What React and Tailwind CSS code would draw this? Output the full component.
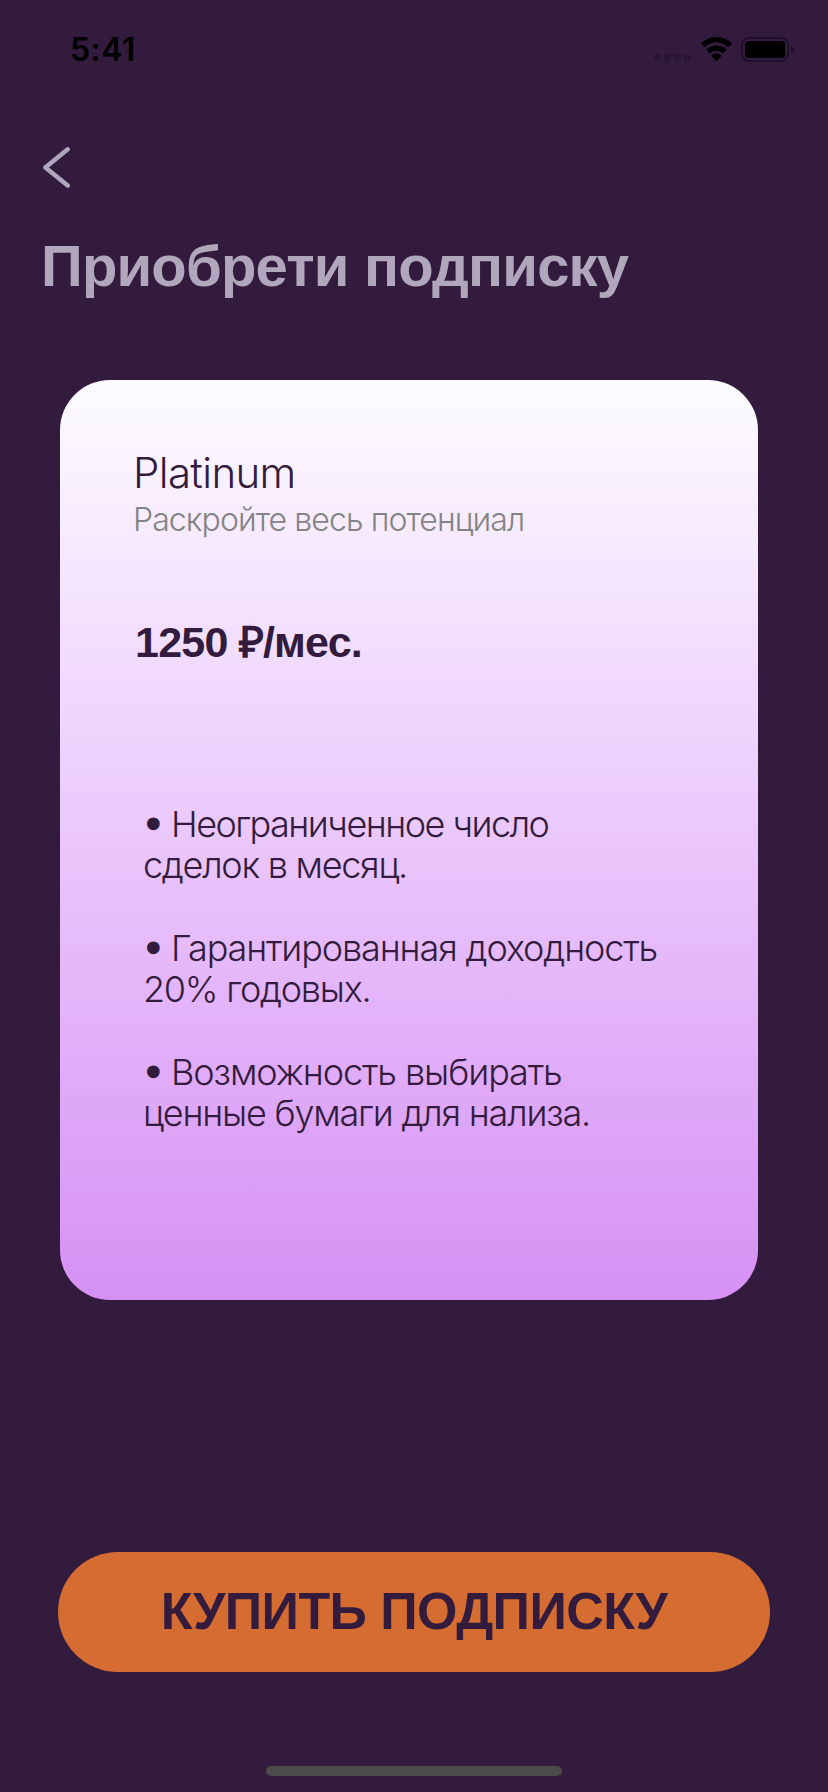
function SignalDots() {
  return (
    <div className="flex gap-[3px] pt-[17px]">
      <span className="size-[7px] rounded-[2px] bg-[#2a1633]" />
      <span className="size-[7px] rounded-[2px] bg-[#2a1633]" />
      <span className="size-[7px] rounded-[2px] bg-[#2a1633]" />
      <span className="size-[7px] rounded-[2px] bg-[#2a1633]" />
    </div>
  );
}

function WifiIcon() {
  return (
    <svg className="ml-[9px] block" width="33" height="25" viewBox="0 0 33 25" fill="#000">
      <path d="M16.5 5.2c4.3 0 8.3 1.7 11.4 4.6.3.3.7.3.9 0l2.8-2.7c.3-.3.3-.7 0-1C27.500 2.100 22.200 0 16.500 0S5.500 2.100 1.400 6.100c-.3.3-.3.7 0 1l2.800 2.700c.2.300.6.300.9 0C8.200 6.900 12.200 5.200 16.500 5.200z" />
      <path d="M16.500 13.700c2.300 0 4.500.9 6.200 2.300.3.300.7.300.9 0l2.700-2.700c.3-.3.300-.700 0-1C23.700 9.900 20.200 8.600 16.500 8.600s-7.200 1.300-9.800 3.700c-.3.300-.3.700 0 1l2.700 2.700c.2.300.6.300.9 0 1.700-1.400 3.900-2.300 6.200-2.300z" />
      <path d="M21.300 19.300c.3-.3.300-.7 0-1-1.300-1.100-3-1.700-4.800-1.700s-3.500.6-4.800 1.700c-.3.300-.3.700 0 1l4.300 4.400c.3.300.7.300 1 0z" />
    </svg>
  );
}

function BatteryIcon() {
  return (
    <svg className="ml-[8px] block" width="54" height="25" viewBox="0 0 54 25">
      <rect x="1" y="1" width="46" height="23" rx="7" fill="none" stroke="#211128" strokeWidth="2" />
      <rect x="4" y="4" width="40" height="17" rx="3.500" fill="#000" />
      <path d="M50 8.500c1.900.7 3 2.200 3 4s-1.100 3.300-3 4z" fill="#1f1026" />
    </svg>
  );
}

function Bullet() {
  return (
    <span className="inline-block w-[28px] font-['DejaVu_Sans',sans-serif] text-[35px] font-normal leading-[0] tracking-normal [-webkit-text-stroke:2.5px_#331b3d]">•</span>
  );
}

export default function App() {
  return (
    <div className="flex h-[1792px] w-[828px] flex-col items-start bg-[#331b3d] font-['Liberation_Sans',sans-serif] text-[#331b3d]">
      <header className="flex h-[147px] w-full items-start justify-between pl-[70px] pr-[33px] pt-[37px]">
        <div className="-mt-[7px] font-['Inter',sans-serif] text-[32px] font-semibold leading-[39px] tracking-[0.4px] text-black">5:41</div>
        <div className="flex items-start">
          <SignalDots />
          <WifiIcon />
          <BatteryIcon />
        </div>
      </header>

      <button aria-label="Назад" className="ml-[42px] h-[41px]">
        <svg className="block" width="29" height="41" viewBox="0 0 29 41" fill="none" stroke="#b0a7bd" strokeWidth="4.400" strokeLinecap="round" strokeLinejoin="round">
          <path d="M25.700 2.300L3.400 20.500l22.300 18" />
        </svg>
      </button>

      <h1 className="ml-[41px] mt-[48px] whitespace-nowrap text-[58px] font-bold leading-[60px] tracking-[-0.81px] text-[#b0a7bd]">Приобрети подписку</h1>

      <main className="ml-[60px] mt-[84px] flex h-[920px] w-[698px] flex-col rounded-[50px] bg-gradient-to-b from-[#fdfcff] to-[#d690f4] pl-[74px] pt-[68px] font-['Inter',sans-serif] font-light">
        <h2 className="-ml-[1px] text-[42px] leading-[50px] tracking-[-0.64px]">Platinum</h2>
        <p className="-ml-[1px] mt-[2px] whitespace-nowrap text-[32px] leading-[40px] tracking-[-0.9px] text-[#838383]">Раскройте весь потенциал</p>
        <div className="ml-px mt-[77px] whitespace-nowrap font-['Liberation_Sans',sans-serif] text-[43px] font-bold leading-[50px] tracking-[-0.78px]">1250 ₽/мес.</div>
        <ul className="ml-[9px] mt-[137px] flex flex-col gap-[42px] whitespace-nowrap text-[36px] leading-[41px]">
          <li>
            <div className="h-[41px] tracking-[-1.52px]"><Bullet />Неограниченное число</div>
            <div className="h-[41px] tracking-[-1.27px]">сделок в месяц.</div>
          </li>
          <li>
            <div className="h-[41px] tracking-[-1.12px]"><Bullet />Гарантированная доходность</div>
            <div className="h-[41px] tracking-[-1.23px]">20% годовых.</div>
          </li>
          <li>
            <div className="h-[41px] tracking-[-1.07px]"><Bullet />Возможность выбирать</div>
            <div className="h-[41px] tracking-[-1.2px]">ценные бумаги для нализа.</div>
          </li>
        </ul>
      </main>

      <button className="ml-[58px] mt-[252px] flex h-[120px] w-[712px] items-center justify-center whitespace-nowrap rounded-full bg-[#d56c31] pb-[2px] text-[52px] font-bold leading-[60px] tracking-[-0.59px]">КУПИТЬ ПОДПИСКУ</button>

      <div className="ml-[266px] mt-[94px] h-[10px] w-[296px] rounded-full bg-[#4c4a4a]" />
    </div>
  );
}
